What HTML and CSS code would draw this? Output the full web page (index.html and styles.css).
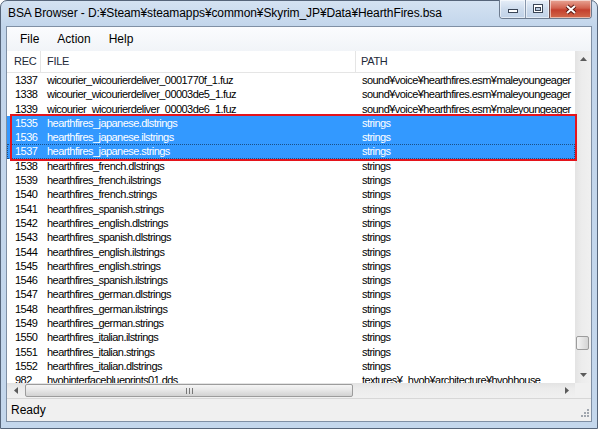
FILE: index.html
```html
<!DOCTYPE html>
<html>
<head>
  <meta charset="UTF-8">
  <link rel="stylesheet" href="styles.css">
</head>
<body>
  <div class="window">
    <div class="titlebar">
      <span class="title">BSA Browser - D:¥Steam¥steamapps¥common¥Skyrim_JP¥Data¥HearthFires.bsa</span>
      <div class="caption-buttons">
        <div class="cap cap-min">
          <svg width="12" height="10" viewBox="0 0 12 10"><rect x="1.5" y="5.5" width="9" height="3" fill="#fff" stroke="#3a4556"/></svg>
        </div>
        <div class="cap cap-max">
          <svg width="12" height="10" viewBox="0 0 12 10"><rect x="1.5" y="0.5" width="9" height="8" fill="#fff" stroke="#3a4556"/><rect x="3.5" y="3.5" width="5" height="3" fill="#b9c9de" stroke="#3a4556"/></svg>
        </div>
        <div class="cap cap-close">
          <svg width="14" height="11" viewBox="0 0 14 11"><path d="M3 2 L11 9 M11 2 L3 9" stroke="#5a1a14" stroke-width="4"/><path d="M3 2 L11 9 M11 2 L3 9" stroke="#fff" stroke-width="2"/></svg>
        </div>
      </div>
    </div>

    <div class="client">
      <div class="menubar">
        <span>File</span>
        <span>Action</span>
        <span>Help</span>
      </div>

      <div class="listview">
        <div class="list-body">
          <div class="list-header">
            <div class="col-rec">REC</div>
            <div class="col-file">FILE</div>
            <div class="col-path">PATH</div>
          </div>

          <div class="row"><div class="col-rec">1337</div><div class="col-file">wicourier_wicourierdeliver_0001770f_1.fuz</div><div class="col-path">sound¥voice¥hearthfires.esm¥maleyoungeager</div></div>
          <div class="row"><div class="col-rec">1338</div><div class="col-file">wicourier_wicourierdeliver_00003de5_1.fuz</div><div class="col-path">sound¥voice¥hearthfires.esm¥maleyoungeager</div></div>
          <div class="row"><div class="col-rec">1339</div><div class="col-file">wicourier_wicourierdeliver_00003de6_1.fuz</div><div class="col-path">sound¥voice¥hearthfires.esm¥maleyoungeager</div></div>

          <div class="marked">
            <div class="row selected"><div class="col-rec">1535</div><div class="col-file">hearthfires_japanese.dlstrings</div><div class="col-path">strings</div></div>
            <div class="row selected"><div class="col-rec">1536</div><div class="col-file">hearthfires_japanese.ilstrings</div><div class="col-path">strings</div></div>
            <div class="row selected focused"><div class="col-rec">1537</div><div class="col-file">hearthfires_japanese.strings</div><div class="col-path">strings</div></div>
          </div>

          <div class="row"><div class="col-rec">1538</div><div class="col-file">hearthfires_french.dlstrings</div><div class="col-path">strings</div></div>
          <div class="row"><div class="col-rec">1539</div><div class="col-file">hearthfires_french.ilstrings</div><div class="col-path">strings</div></div>
          <div class="row"><div class="col-rec">1540</div><div class="col-file">hearthfires_french.strings</div><div class="col-path">strings</div></div>
          <div class="row"><div class="col-rec">1541</div><div class="col-file">hearthfires_spanish.strings</div><div class="col-path">strings</div></div>
          <div class="row"><div class="col-rec">1542</div><div class="col-file">hearthfires_english.dlstrings</div><div class="col-path">strings</div></div>
          <div class="row"><div class="col-rec">1543</div><div class="col-file">hearthfires_spanish.dlstrings</div><div class="col-path">strings</div></div>
          <div class="row"><div class="col-rec">1544</div><div class="col-file">hearthfires_english.ilstrings</div><div class="col-path">strings</div></div>
          <div class="row"><div class="col-rec">1545</div><div class="col-file">hearthfires_english.strings</div><div class="col-path">strings</div></div>
          <div class="row"><div class="col-rec">1546</div><div class="col-file">hearthfires_spanish.ilstrings</div><div class="col-path">strings</div></div>
          <div class="row"><div class="col-rec">1547</div><div class="col-file">hearthfires_german.dlstrings</div><div class="col-path">strings</div></div>
          <div class="row"><div class="col-rec">1548</div><div class="col-file">hearthfires_german.ilstrings</div><div class="col-path">strings</div></div>
          <div class="row"><div class="col-rec">1549</div><div class="col-file">hearthfires_german.strings</div><div class="col-path">strings</div></div>
          <div class="row"><div class="col-rec">1550</div><div class="col-file">hearthfires_italian.ilstrings</div><div class="col-path">strings</div></div>
          <div class="row"><div class="col-rec">1551</div><div class="col-file">hearthfires_italian.strings</div><div class="col-path">strings</div></div>
          <div class="row"><div class="col-rec">1552</div><div class="col-file">hearthfires_italian.dlstrings</div><div class="col-path">strings</div></div>
          <div class="row"><div class="col-rec">982</div><div class="col-file">hvohinterfaceblueprints01.dds</div><div class="col-path">textures¥_hvoh¥architecture¥hvohhouse</div></div>
        </div>

        <div class="vscroll">
          <div class="sb-btn">
            <svg width="7" height="4" viewBox="0 0 7 4"><path d="M0 4 L3.5 0 L7 4 Z" fill="#5b5b5b"/></svg>
          </div>
          <div class="vs-track"><div class="vs-thumb"></div></div>
          <div class="sb-btn">
            <svg width="7" height="4" viewBox="0 0 7 4"><path d="M0 0 L3.5 4 L7 0 Z" fill="#5b5b5b"/></svg>
          </div>
        </div>

        <div class="hscroll">
          <div class="sb-btn hs-btn">
            <svg width="4" height="7" viewBox="0 0 4 7"><path d="M4 0 L0 3.5 L4 7 Z" fill="#5b5b5b"/></svg>
          </div>
          <div class="hs-track">
            <div class="hs-thumb">
              <svg width="7" height="6" viewBox="0 0 7 6"><path d="M0.5 0 V6 M3.5 0 V6 M6.5 0 V6" stroke="#777" stroke-width="1"/></svg>
            </div>
          </div>
          <div class="sb-btn hs-btn">
            <svg width="4" height="7" viewBox="0 0 4 7"><path d="M0 0 L4 3.5 L0 7 Z" fill="#5b5b5b"/></svg>
          </div>
        </div>

        <div class="corner"></div>
      </div>

      <div class="statusbar">
        <span>Ready</span>
        <svg class="grip" width="10" height="10" viewBox="0 0 10 10">
          <rect x="8" y="0" width="2" height="2" fill="#a0a6ae"/>
          <rect x="5" y="3" width="2" height="2" fill="#a0a6ae"/>
          <rect x="8" y="3" width="2" height="2" fill="#a0a6ae"/>
          <rect x="2" y="6" width="2" height="2" fill="#a0a6ae"/>
          <rect x="5" y="6" width="2" height="2" fill="#a0a6ae"/>
          <rect x="8" y="6" width="2" height="2" fill="#a0a6ae"/>
        </svg>
      </div>
    </div>
  </div>
</body>
</html>
```

FILE: styles.css
```css
html,
body {
  margin: 0;
  height: 100%;
  width: 100%;
  overflow: hidden;
  font-family: "Liberation Sans", Arial, sans-serif;
  background: #fff;
}

.window {
  width: 598px;
  height: 429px;
  box-sizing: border-box;
  display: flex;
  flex-direction: column;
  padding: 0 5px 6px 5px;
  border: 1px solid #56657a;
  border-radius: 7px 7px 0 0;
  background: linear-gradient(#d4e2f2, #c2d5eb 26px, #c4d7ec);
}

/* Title bar */
.titlebar {
  height: 25px;
  display: flex;
  align-items: flex-start;
  flex-shrink: 0;
}

.title {
  padding-left: 2px;
  line-height: 24px;
  font-size: 12px;
  letter-spacing: -0.1px;
  color: #000;
  white-space: nowrap;
}

.caption-buttons {
  margin-left: auto;
  margin-top: -1px;
  display: flex;
  height: 18px;
  border: 1px solid #6d7b8f;
  border-top: none;
  border-radius: 0 0 4px 4px;
  overflow: hidden;
}

.cap {
  display: flex;
  align-items: center;
  justify-content: center;
  box-shadow: inset 0 0 0 1px rgba(255, 255, 255, 0.55);
}

.cap-min {
  width: 25px;
  background: linear-gradient(#e6eef8, #cddbec 50%, #c1d2e8);
  border-right: 1px solid #8796ab;
}

.cap-max {
  width: 23px;
  background: linear-gradient(#e6eef8, #cddbec 50%, #c1d2e8);
  border-right: 1px solid #6d4b4b;
}

.cap-close {
  width: 41px;
  background: linear-gradient(#e8a595, #d2624f 45%, #c4402e 55%, #d26a4c);
}

/* Client area */
.client {
  flex: 1;
  min-height: 0;
  display: flex;
  flex-direction: column;
  border: 1px solid #7f8fa4;
  background: #f0f0f0;
}

.menubar {
  height: 24px;
  flex-shrink: 0;
  display: flex;
  align-items: center;
  padding-left: 4px;
  font-size: 12px;
  color: #000;
  background: linear-gradient(#fbfcfe, #f1f4f8);
}

.menubar span {
  padding: 0 9px;
}

.listview {
  flex: 1;
  min-height: 0;
  display: grid;
  grid-template-columns: 1fr 16px;
  grid-template-rows: 1fr 15px;
  background: #fff;
}

.list-body {
  min-width: 0;
  min-height: 0;
  overflow-y: clip;
  overflow-x: visible;
  font-size: 11px;
  letter-spacing: -0.55px;
  color: #000;
}

.list-header,
.row {
  display: grid;
  grid-template-columns: 34px 315px 1fr;
}

.list-header {
  height: 21px;
  line-height: 21px;
  border-bottom: 1px solid #e5e5e5;
  color: #1e2a38;
  letter-spacing: -0.3px;
}

.list-header .col-rec {
  padding-left: 7px;
  border-right: 1px solid #e5e5e5;
}

.list-header .col-file {
  padding-left: 6px;
  border-right: 1px solid #e5e5e5;
}

.list-header .col-path {
  padding-left: 5px;
}

.row {
  height: 14.3px;
  line-height: 14.3px;
}

.row > div {
  white-space: nowrap;
  overflow: hidden;
}

.row .col-rec {
  padding-left: 8px;
}

.row .col-file {
  padding-left: 6px;
}

.row .col-path {
  padding-left: 6px;
}

.selected {
  background: #3399ff;
  color: #fff;
}

.focused {
  outline: 1px dotted #1b4f86;
  outline-offset: -1px;
}

.marked {
  position: relative;
}

.marked::after {
  content: "";
  position: absolute;
  top: -2px;
  bottom: -2px;
  left: 3px;
  right: -2px;
  border: 2px solid #e5141c;
  z-index: 2;
}

/* Scrollbars */
.vscroll {
  display: flex;
  flex-direction: column;
  background: linear-gradient(90deg, #e3e3e3, #ececec 40%, #f0f0f0);
}

.sb-btn {
  height: 16px;
  display: flex;
  align-items: center;
  justify-content: center;
}

.vs-track {
  flex: 1;
  padding-top: 269px;
}

.vs-thumb {
  height: 12px;
  margin: 0 2px 0 1px;
  border: 1px solid #9c9c9c;
  border-radius: 2px;
  background: linear-gradient(90deg, #f5f5f5, #e4e4e4 50%, #d4d4d4);
}

.hscroll {
  display: flex;
  background: linear-gradient(#e3e3e3, #ececec 40%, #f0f0f0);
}

.hs-btn {
  width: 17px;
  height: 15px;
}

.hs-track {
  flex: 1;
  display: flex;
  padding: 1px 0;
}

.hs-thumb {
  width: 326px;
  margin-left: 1px;
  display: flex;
  align-items: center;
  justify-content: center;
  border: 1px solid #9c9c9c;
  border-radius: 2px;
  background: linear-gradient(#f5f5f5, #e6e6e6 50%, #d2d2d2);
}

.corner {
  background: #f0f0f0;
}

/* Status bar */
.statusbar {
  height: 22px;
  flex-shrink: 0;
  display: flex;
  align-items: center;
  justify-content: space-between;
  padding: 0 2px 0 4px;
  border-top: 1px solid #d7d7d7;
  font-size: 12px;
  color: #000;
}

.grip {
  align-self: flex-end;
  margin-bottom: 2px;
}
```
